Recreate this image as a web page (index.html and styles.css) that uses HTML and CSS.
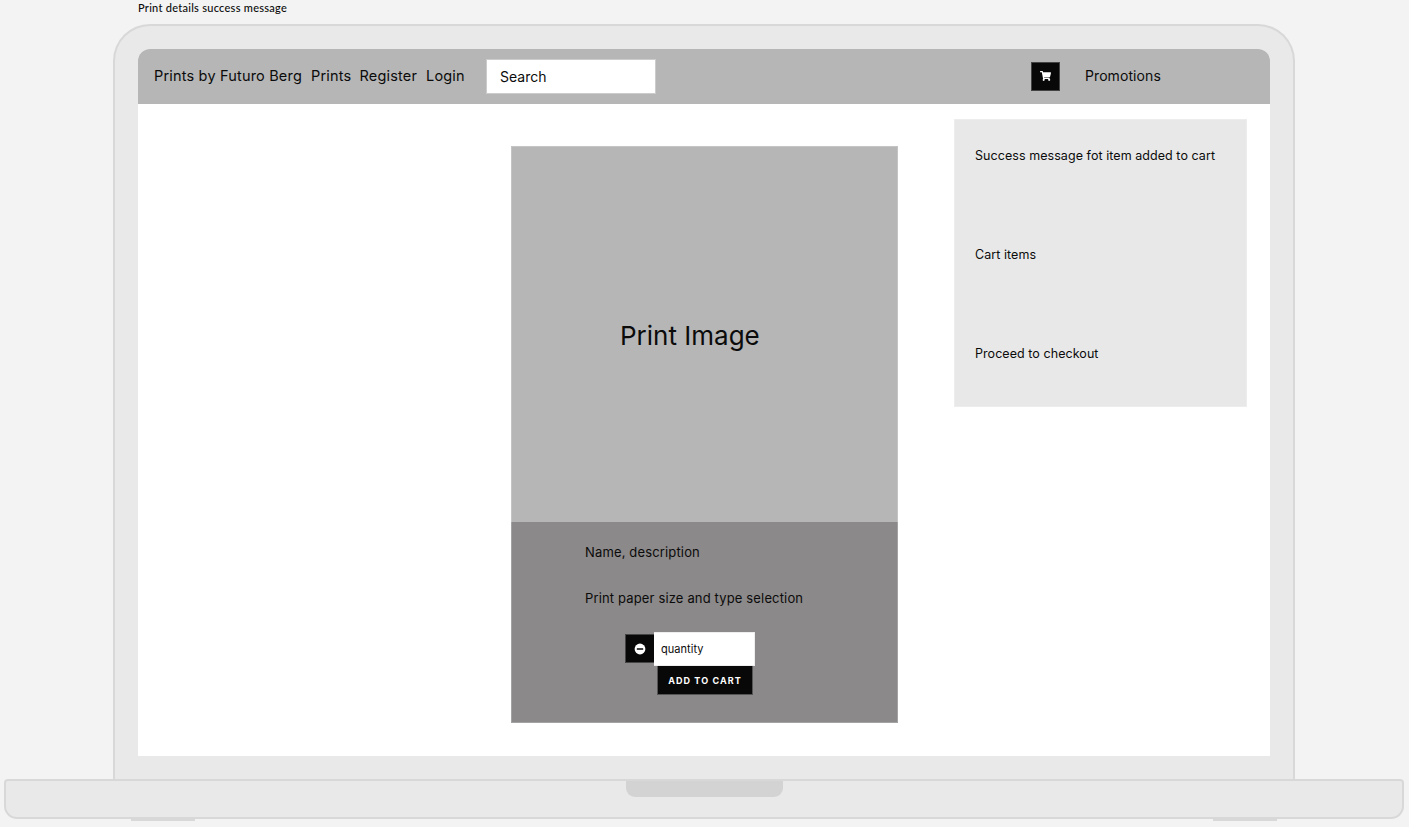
FILE: index.html
```
<!DOCTYPE html>
<html lang="en">
<head>
<meta charset="utf-8">
<title>Print details success message</title>
<link rel="stylesheet" href="styles.css">
</head>
<body>
<div class="frame-title"><span>Print details success message</span></div>
<div class="lid">
  <div class="screen">
    <nav class="navbar">
      <a class="brand">Prints by Futuro Berg</a>
      <a class="link prints">Prints</a>
      <a class="link register">Register</a>
      <a class="link login">Login</a>
      <div class="search"><span>Search</span></div>
      <div class="icon-button cart">
        <svg width="11" height="10" viewBox="0 0 576 512" fill="#fff"><path d="M528.12 301.319l47.273-208C578.806 78.301 567.391 64 551.99 64H159.208l-9.166-44.81C147.758 8.021 137.93 0 126.529 0H24C10.745 0 0 10.745 0 24v16c0 13.255 10.745 24 24 24h69.883l70.248 343.435C147.325 417.1 136 435.222 136 456c0 30.928 25.072 56 56 56s56-25.072 56-56c0-15.674-6.447-29.835-16.824-40h209.647C430.447 426.165 424 440.326 424 456c0 30.928 25.072 56 56 56s56-25.072 56-56c0-22.172-12.888-41.332-31.579-50.405l5.517-24.276c3.413-15.018-8.002-29.319-23.403-29.319H218.117l-6.545-32h293.145c11.206 0 20.92-7.754 23.403-18.681z"/></svg>
      </div>
      <a class="promotions">Promotions</a>
    </nav>
    <main class="content">
      <article class="card">
        <div class="picture"><span>Print Image</span></div>
        <div class="details">
          <p class="name">Name, description</p>
          <p class="paper">Print paper size and type selection</p>
          <div class="quantity-row">
            <div class="icon-button minus">
              <svg width="12" height="12" viewBox="0 0 12 12"><circle cx="6" cy="6" r="5.4" fill="#fff"/><rect x="2.8" y="5.2" width="6.4" height="1.6" rx=".3" fill="#080808"/></svg>
            </div>
            <div class="quantity"><span>quantity</span></div>
          </div>
          <div class="add"><span>ADD TO CART</span></div>
        </div>
      </article>
      <aside class="panel">
        <p class="success">Success message fot item added to cart</p>
        <p class="items">Cart items</p>
        <p class="checkout">Proceed to checkout</p>
      </aside>
    </main>
  </div>
</div>
<div class="base"><div class="notch"></div></div>
<div class="feet"><i></i><i></i></div>
</body>
</html>
```
FILE: styles.css
```
* { box-sizing: border-box; }
body {
  margin: 0;
  height: 827px;
  overflow: hidden;
  background: #f3f3f3;
  color: #0b0b0b;
  font-family: Inter, "Liberation Sans", sans-serif;
}
p { margin: 0; }
a, span, p { white-space: nowrap; }
.frame-title {
  height: 24px;
  padding-left: 138px;
  font: 500 11px/15px Lato, sans-serif;
  letter-spacing: .27px;
}
.lid {
  width: 1182px;
  height: 755px;
  margin-left: 113px;
  padding: 23px 23px 0;
  background: #e9e9e9;
  border: 2px solid #d8d8d8;
  border-bottom: 0;
  border-radius: 37px 37px 0 0;
}
.screen {
  width: 1132px;
  height: 707px;
  background: #fff;
  border-radius: 12px 12px 0 0;
  overflow: hidden;
}
.navbar {
  display: flex;
  align-items: center;
  height: 55px;
  padding-left: 16px;
  background: #b6b6b6;
  font-size: 14.5px;
  letter-spacing: .18px;
}
.navbar > a { padding-bottom: 2px; }
.brand { width: 157px; }
.prints { width: 48.5px; }
.register { width: 66.5px; }
.login { width: 60px; }
.search {
  width: 170px;
  height: 35px;
  padding-left: 13px;
  background: #fff;
  border: 1px solid #ccc;
  font-size: 14px;
  line-height: 33px;
  letter-spacing: .03px;
}
.icon-button {
  display: flex;
  align-items: center;
  justify-content: center;
  width: 29px;
  height: 29px;
  background: #080808;
  border: 1px solid #444;
}
.cart { margin-left: 375px; }
.cart svg { margin-bottom: 1px; }
.promotions { margin-left: 25px; font-size: 14px; letter-spacing: .08px; }
.content { display: flex; align-items: flex-start; padding-left: 373px; }
.card { width: 387px; margin-top: 42px; }
.picture {
  height: 376px;
  padding: 168px 0 0 108px;
  background: #b6b6b6;
  border: 1px solid #c4c4c4;
  border-bottom: 0;
  font-size: 26px;
  line-height: 42px;
  letter-spacing: 0;
}
.details {
  height: 201px;
  padding: 20px 0 0 73px;
  background: #8b8989;
  border: 1px solid #a4a3a3;
  border-top: 0;
  font-size: 13px;
  line-height: 20px;
  letter-spacing: .15px;
}
.paper { margin-top: 26px; }
.quantity-row { display: flex; align-items: flex-start; margin: 24px 0 0 40px; }
.minus { margin-top: 2px; border-right: 0; }
.quantity {
  width: 101px;
  height: 34px;
  padding-left: 7px;
  background: #fff;
  border: 1px solid #eee;
  border-left: 0;
  font-size: 11px;
  line-height: 33px;
  letter-spacing: .05px;
}
.add {
  width: 96px;
  height: 29px;
  margin-left: 72px;
  background: #080808;
  border: 1px solid #555;
  border-top: 0;
  color: #fff;
  font-size: 9px;
  font-weight: 700;
  line-height: 29px;
  letter-spacing: 1.08px;
  text-align: center;
}
.panel {
  width: 293px;
  height: 288px;
  margin: 15px 0 0 56px;
  padding: 26px 0 0 20px;
  background: #e8e8e8;
  border: 1px solid #ededed;
  font-size: 12.5px;
  line-height: 20px;
  letter-spacing: .06px;
}
.items, .checkout { margin-top: 79px; }
.base {
  display: flex;
  justify-content: center;
  width: 1400px;
  height: 40px;
  margin-left: 4px;
  background: #e9e9e9;
  border: 2px solid #d8d8d8;
  border-radius: 4px 4px 13px 13px;
}
.notch {
  width: 157px;
  height: 16px;
  background: #d3d3d3;
  border-radius: 0 0 9px 9px;
}
.feet { display: flex; justify-content: space-between; padding: 0 132px 0 131px; }
.feet i { width: 64px; height: 2px; background: #d8d8d8; }
```
